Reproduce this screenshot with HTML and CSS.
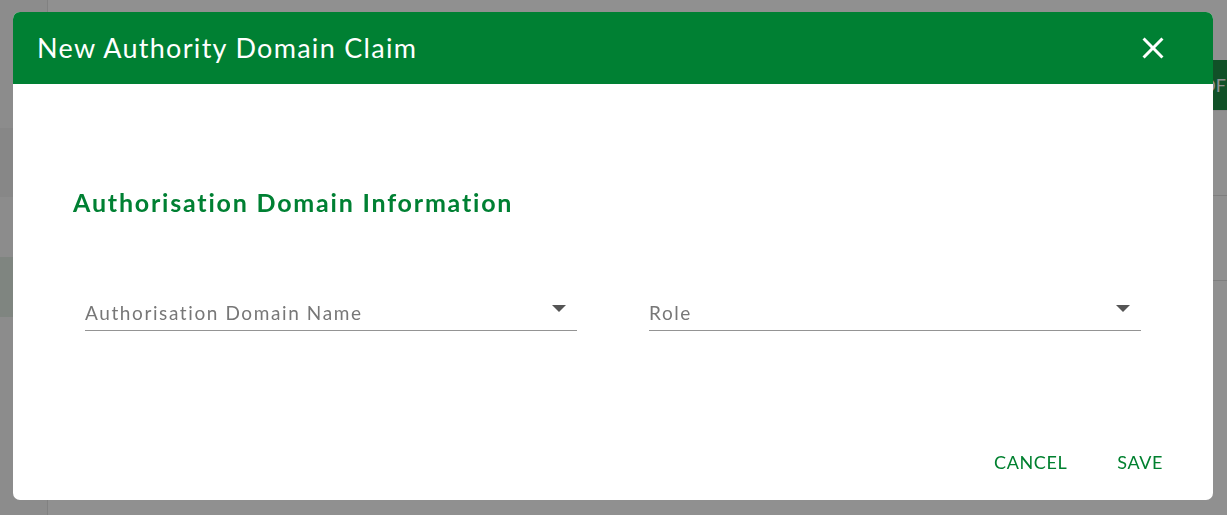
FILE: index.html
```html
<!DOCTYPE html>
<html lang="en">
<head>
    <meta charset="UTF-8">
    <meta name="viewport" content="width=device-width, initial-scale=1.0">
    <title>New Authority Domain Claim</title>
    <link rel="stylesheet" href="styles.css">
</head>
<body>
    <div class="page">
        <nav class="sidebar">
            <div class="nav-item"></div>
            <div class="nav-item dark"></div>
            <div class="nav-item"></div>
            <div class="nav-item active"></div>
        </nav>
        <main class="main">
            <div class="toolbar">
                <button class="page-btn">PDF</button>
            </div>
            <div class="row"></div>
            <div class="row"></div>
        </main>
    </div>

    <div class="overlay">
        <div class="dialog">
            <div class="dialog-header">
                <h1>New Authority Domain Claim</h1>
                <button class="close-btn" aria-label="Close">
                    <svg viewBox="0 0 24 24">
                        <path d="M19 6.41L17.59 5 12 10.59 6.41 5 5 6.41 10.59 12 5 17.59 6.41 19 12 13.41 17.59 19 19 17.59 13.41 12z" fill="#fff"/>
                    </svg>
                </button>
            </div>

            <div class="dialog-body">
                <h2>Authorisation Domain Information</h2>
                <div class="fields">
                    <div class="select">
                        <span class="placeholder">Authorisation Domain Name</span>
                        <span class="arrow"></span>
                    </div>
                    <div class="select">
                        <span class="placeholder">Role</span>
                        <span class="arrow"></span>
                    </div>
                </div>
            </div>

            <div class="dialog-actions">
                <button class="text-btn">CANCEL</button>
                <button class="text-btn">SAVE</button>
            </div>
        </div>
    </div>
</body>
</html>
```

FILE: styles.css
```css
html, body {
    margin: 0;
    height: 100%;
    overflow: hidden;
}
body {
    font-family: Lato, "Open Sans", sans-serif;
    background-color: #fff;
}
.page {
    display: flex;
    height: 100%;
}
.sidebar {
    width: 48px;
    flex-shrink: 0;
    background-color: #f7f7f7;
    border-right: 1px solid #e0e0e0;
    padding-top: 68px;
    box-sizing: border-box;
}
.nav-item {
    height: 60px;
}
.nav-item.dark {
    height: 69px;
    background-color: #ececec;
}
.nav-item.active {
    background-color: #dde9df;
}
.main {
    flex: 1;
    position: relative;
}
.toolbar {
    height: 110px;
    border-bottom: 1px solid #eee;
    position: relative;
}
.page-btn {
    position: absolute;
    right: 0;
    top: 60px;
    height: 50px;
    padding: 0 1px 0 14px;
    border: none;
    background-color: #00802f;
    color: #fff;
    font: 18px Lato, sans-serif;
}
.row {
    height: 84px;
    border-bottom: 1px solid #ddd;
}

.overlay {
    position: fixed;
    inset: 0;
    background-color: rgba(33, 33, 33, 0.5);
    padding: 12px 14px 15px 13px;
    box-sizing: border-box;
    display: flex;
}
.dialog {
    flex: 1;
    display: flex;
    flex-direction: column;
    background-color: #fff;
    border-radius: 7px;
    overflow: hidden;
}
.dialog-header {
    height: 72px;
    flex-shrink: 0;
    background-color: #008033;
    display: flex;
    align-items: center;
    justify-content: space-between;
    padding: 0 42px 0 24px;
}
.dialog-header h1 {
    margin: 0;
    color: #fff;
    font-size: 27px;
    font-weight: 400;
    letter-spacing: 1.3px;
    padding-bottom: 2px;
}
.close-btn {
    border: none;
    background: none;
    padding: 0;
    width: 36px;
    height: 36px;
    display: flex;
    align-items: center;
    justify-content: center;
}
.close-btn svg {
    width: 36px;
    height: 36px;
}
.dialog-body {
    flex: 1;
    padding: 104px 72px 0 60px;
}
.dialog-body h2 {
    margin: 0;
    color: #008033;
    font-size: 25px;
    font-weight: 700;
    letter-spacing: 1.8px;
    line-height: 28px;
}
.fields {
    display: flex;
    gap: 72px;
    margin-top: 82px;
    padding-left: 12px;
}
.select {
    flex: 1;
    display: flex;
    justify-content: space-between;
    align-items: center;
    height: 32px;
    border-bottom: 1px solid #949494;
}
.placeholder {
    color: #777;
    font-size: 19px;
    letter-spacing: 1.6px;
    padding-bottom: 3px;
}
.arrow {
    width: 0;
    height: 0;
    border-left: 7px solid transparent;
    border-right: 7px solid transparent;
    border-top: 7px solid #555;
    margin-right: 11px;
    margin-bottom: 12px;
}
.dialog-actions {
    display: flex;
    justify-content: flex-end;
    gap: 18px;
    padding: 0 34px 19px;
}
.text-btn {
    border: none;
    background: none;
    color: #00802f;
    font: 18px Lato, sans-serif;
    letter-spacing: 0.6px;
    padding: 8px 16px;
}
```
